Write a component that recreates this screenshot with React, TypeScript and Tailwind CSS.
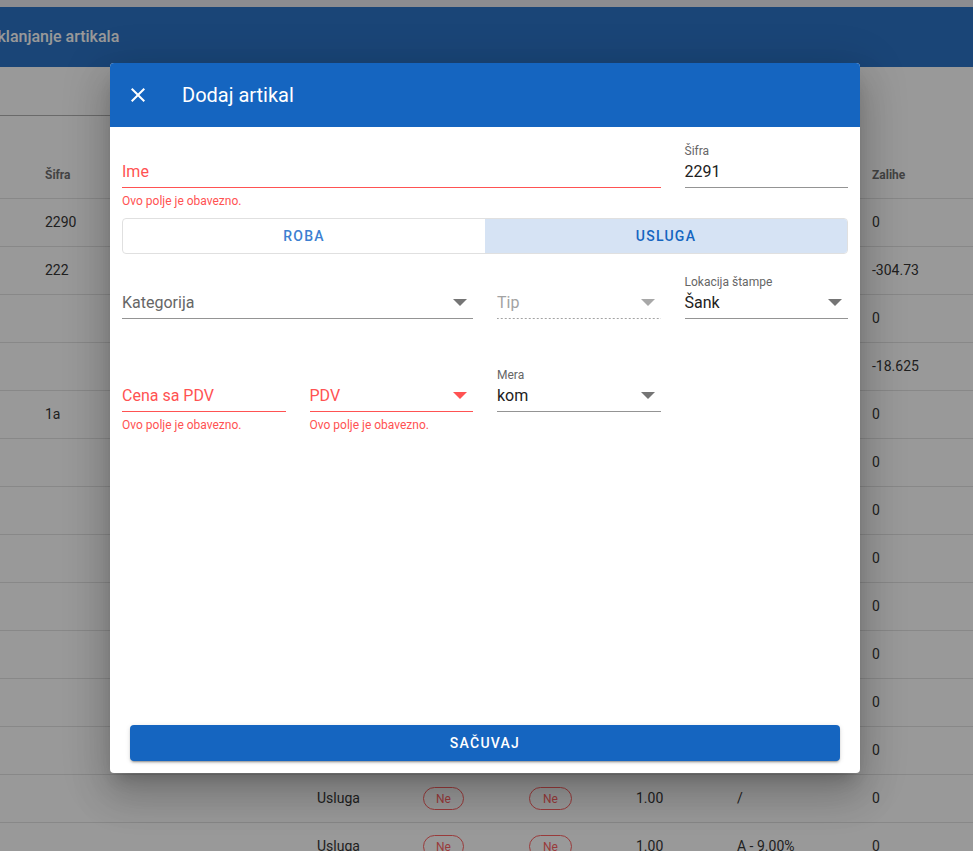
import React from "react";

type Row = {
  sifra: string;
  tip: string;
  chips: boolean;
  kol: string;
  pdv: string;
  zal: string;
};

const rows: Row[] = [
  { sifra: "2290", tip: "", chips: false, kol: "", pdv: "", zal: "0" },
  { sifra: "222", tip: "", chips: false, kol: "", pdv: "", zal: "-304.73" },
  { sifra: "", tip: "", chips: false, kol: "", pdv: "", zal: "0" },
  { sifra: "", tip: "", chips: false, kol: "", pdv: "", zal: "-18.625" },
  { sifra: "1a", tip: "", chips: false, kol: "", pdv: "", zal: "0" },
  { sifra: "", tip: "", chips: false, kol: "", pdv: "", zal: "0" },
  { sifra: "", tip: "", chips: false, kol: "", pdv: "", zal: "0" },
  { sifra: "", tip: "", chips: false, kol: "", pdv: "", zal: "0" },
  { sifra: "", tip: "", chips: false, kol: "", pdv: "", zal: "0" },
  { sifra: "", tip: "", chips: false, kol: "", pdv: "", zal: "0" },
  { sifra: "", tip: "", chips: false, kol: "", pdv: "", zal: "0" },
  { sifra: "", tip: "", chips: false, kol: "", pdv: "", zal: "0" },
  { sifra: "", tip: "Usluga", chips: true, kol: "1.00", pdv: "/", zal: "0" },
  { sifra: "", tip: "Usluga", chips: true, kol: "1.00", pdv: "A - 9.00%", zal: "0" },
];

function Chip({ wide }: { wide?: boolean }) {
  return (
    <span
      className={
        wide
          ? "inline-flex h-[23px] items-center rounded-full border border-[#ff5252] px-[13px] text-[12px] text-[#ff5252]"
          : "inline-flex h-[23px] items-center rounded-full border border-[#ff5252] px-[12px] text-[12px] text-[#ff5252]"
      }
    >
      Ne
    </span>
  );
}

function Arrow({ tone }: { tone: "gray" | "light" | "red" }) {
  const fill = tone === "red" ? "#ff5252" : tone === "light" ? "#a8a8a8" : "#757575";
  return (
    <svg width="14" height="7" viewBox="0 0 14 7" className="mr-[6px] mt-[12px] shrink-0">
      <polygon points="0,0 14,0 7,7" fill={fill} />
    </svg>
  );
}

type FieldProps = {
  label: string;
  value?: string;
  error?: boolean;
  disabled?: boolean;
  select?: boolean;
  helper?: boolean;
  className?: string;
};

function Field({ label, value, error, disabled, select, helper, className }: FieldProps) {
  const hasValue = !!value;
  const boxClass = disabled
    ? "flex h-[32px] items-start justify-between bg-[linear-gradient(to_right,#a3a3a3_0,#a3a3a3_2px,transparent_2px)] bg-[length:4px_1px] bg-bottom bg-repeat-x"
    : error
    ? "flex h-[32px] items-start justify-between border-b border-[#ff5252]"
    : "flex h-[32px] items-start justify-between border-b border-[#949494]";
  const textClass = hasValue
    ? "pt-[4px] text-[16px] leading-[23px] text-[#212121]"
    : disabled
    ? "pt-[4px] text-[16px] leading-[23px] text-[#a3a3a3]"
    : error
    ? "pt-[4px] text-[16px] leading-[23px] text-[#ff5252]"
    : "pt-[4px] text-[16px] leading-[23px] text-[#666666]";
  return (
    <div className={"flex min-w-0 flex-col " + (className ?? "")}>
      <div className="h-[16px] whitespace-nowrap text-[12px] leading-[22px] text-[#666666]">
        {hasValue ? label : ""}
      </div>
      <div className={boxClass}>
        <span className={textClass}>{hasValue ? value : label}</span>
        {select && <Arrow tone={disabled ? "light" : error ? "red" : "gray"} />}
      </div>
      {helper && (
        <div className="mt-[3px] text-[12px] leading-[20px] text-[#ff5252]">Ovo polje je obavezno.</div>
      )}
    </div>
  );
}

export default function App() {
  return (
    <div className="relative h-[851px] w-[973px] overflow-hidden bg-white font-[family-name:Roboto,sans-serif] text-[#212121]">
      {/* background page */}
      <div className="flex flex-col">
        <div className="h-[7px] bg-[#e8e8ee]" />
        <div className="flex h-[60px] items-center bg-[#1565c0]">
          <span className="ml-[-13px] whitespace-nowrap text-[16px] font-medium text-white">Uklanjanje artikala</span>
        </div>
        <div className="h-[49px]">
          <div className="h-full w-[420px] border-b border-[#a8a8a8]" />
        </div>
        <div className="h-[35px]" />
        <div className="flex h-[48px] items-center border-b border-[#e0e0e0] text-[12px] font-bold text-[#616161]">
          <div className="w-[317px] pl-[45px]">Šifra</div>
          <div className="w-[106px]" />
          <div className="w-[106px]" />
          <div className="w-[107px]" />
          <div className="w-[101px]" />
          <div className="w-[135px]" />
          <div className="flex-1">Zalihe</div>
        </div>
        {rows.map((r, i) => (
          <div key={i} className="flex h-[48px] shrink-0 items-center border-b border-[#e0e0e0] text-[14px] text-[#212121]">
            <div className="w-[317px] pl-[45px]">{r.sifra}</div>
            <div className="w-[106px]">{r.tip}</div>
            <div className="w-[106px]">{r.chips && <Chip />}</div>
            <div className="w-[107px]">{r.chips && <Chip wide />}</div>
            <div className="w-[101px]">{r.kol}</div>
            <div className="w-[135px]">{r.pdv}</div>
            <div className="flex-1">{r.zal}</div>
          </div>
        ))}
      </div>

      {/* overlay */}
      <div className="absolute inset-0 bg-[rgba(33,33,33,0.46)]" />

      {/* dialog */}
      <div className="absolute left-[110px] top-[63px] flex h-[710px] w-[750px] flex-col overflow-hidden rounded-[4px] bg-white shadow-[0_11px_15px_-7px_rgba(0,0,0,0.2),0_24px_38px_3px_rgba(0,0,0,0.14),0_9px_46px_8px_rgba(0,0,0,0.12)]">
        <div className="flex h-[64px] shrink-0 items-center bg-[#1565c0] pl-[16px]">
          <svg width="24" height="24" viewBox="0 0 24 24" className="shrink-0">
            <path
              fill="#ffffff"
              d="M19,6.41L17.59,5L12,10.59L6.41,5L5,6.41L10.59,12L5,17.59L6.41,19L12,13.41L17.59,19L19,17.59L13.41,12L19,6.41Z"
            />
          </svg>
          <span className="ml-[32px] text-[20px] font-normal text-white">Dodaj artikal</span>
        </div>

        <div className="flex flex-1 flex-col px-[12px] pt-[13px]">
          <div className="grid grid-cols-4 items-start gap-x-[24px]">
            <Field label="Ime" error helper className="col-span-3" />
            <Field label="Šifra" value="2291" />
          </div>

          <div className="mt-[7px] flex h-[36px] overflow-hidden rounded-[4px] border border-[#e0e0e0] text-[14px] font-medium tracking-[1.25px]">
            <div className="flex flex-1 items-center justify-center text-[#3d7fd1]">ROBA</div>
            <div className="flex flex-1 items-center justify-center bg-[#d6e3f4] text-[#1565c0]">USLUGA</div>
          </div>

          <div className="mt-[17px] grid grid-cols-4 items-start gap-x-[24px]">
            <Field label="Kategorija" select className="col-span-2" />
            <Field label="Tip" select disabled />
            <Field label="Lokacija štampe" value="Šank" select />
          </div>

          <div className="mt-[45px] grid grid-cols-4 items-start gap-x-[24px]">
            <Field label="Cena sa PDV" error helper />
            <Field label="PDV" error helper select />
            <Field label="Mera" value="kom" select />
          </div>
        </div>

        <div className="shrink-0 px-[20px] pb-[12px]">
          <div className="flex h-[36px] items-center justify-center rounded-[4px] bg-[#1565c0] text-[14px] font-medium tracking-[1.25px] text-white shadow-[0_3px_1px_-2px_rgba(0,0,0,0.2),0_2px_2px_0_rgba(0,0,0,0.14),0_1px_5px_0_rgba(0,0,0,0.12)]">
            SAČUVAJ
          </div>
        </div>
      </div>
    </div>
  );
}
